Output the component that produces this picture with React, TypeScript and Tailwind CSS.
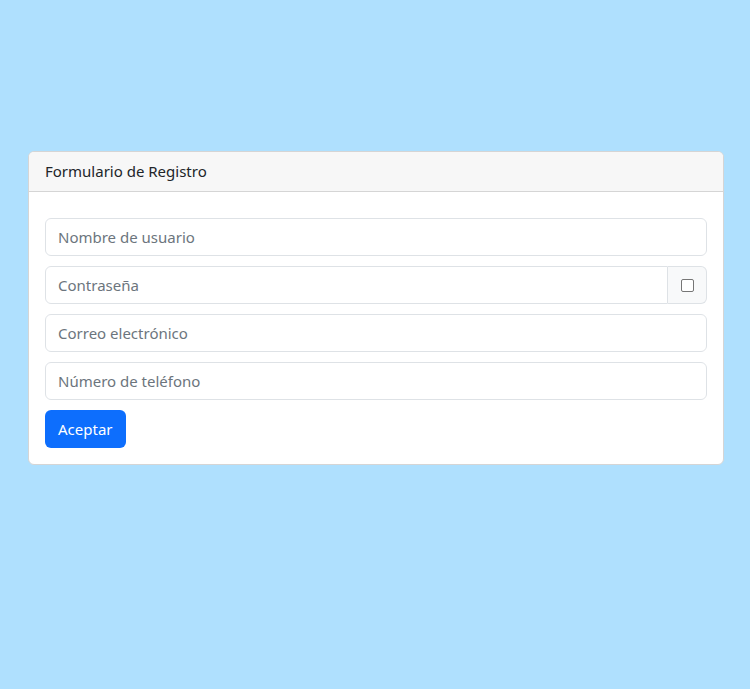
import React from "react";

const inputCls =
  "block w-full h-[38px] px-3 text-[15px] text-[#212529] bg-white border border-[#dee2e6] rounded-[6px] outline-none placeholder:text-[#6c757d]";

export default function App() {
  return (
    <div
      className="min-h-[689px] bg-[#afe0fe] pt-[151px] pl-[28px] pr-[26px]"
      style={{ fontFamily: '"Noto Sans", "Open Sans", sans-serif' }}
    >
      <div className="bg-white border border-[#d5d5d5] rounded-[6px] overflow-hidden">
        <div className="h-[40px] flex items-center px-4 bg-[#f7f7f7] border-b border-[#d5d5d5] text-[15px] text-[#212529]">
          Formulario de Registro
        </div>
        <div className="px-4 pt-4 pb-4 flex flex-col">
          <input className={inputCls + " mt-[10px]"} placeholder="Nombre de usuario" />
          <div className="mt-[10px] flex h-[38px]">
            <input
              type="password"
              className="flex-1 min-w-0 h-[38px] px-3 text-[15px] bg-white border border-[#dee2e6] rounded-l-[6px] outline-none placeholder:text-[#6c757d]"
              placeholder="Contraseña"
            />
            <div className="w-[39px] h-[38px] flex items-center justify-center bg-[#f8f9fa] border border-l-0 border-[#dee2e6] rounded-r-[6px]">
              <div className="w-[13px] h-[13px] border border-[#767676] rounded-[2px] bg-white" />
            </div>
          </div>
          <input className={inputCls + " mt-[10px]"} placeholder="Correo electrónico" />
          <input className={inputCls + " mt-[10px]"} placeholder="Número de teléfono" />
          <div className="mt-[10px]">
            <button className="h-[38px] px-[13px] bg-[#0d6efd] text-white text-[15px] rounded-[6px]">
              Aceptar
            </button>
          </div>
        </div>
      </div>
    </div>
  );
}
